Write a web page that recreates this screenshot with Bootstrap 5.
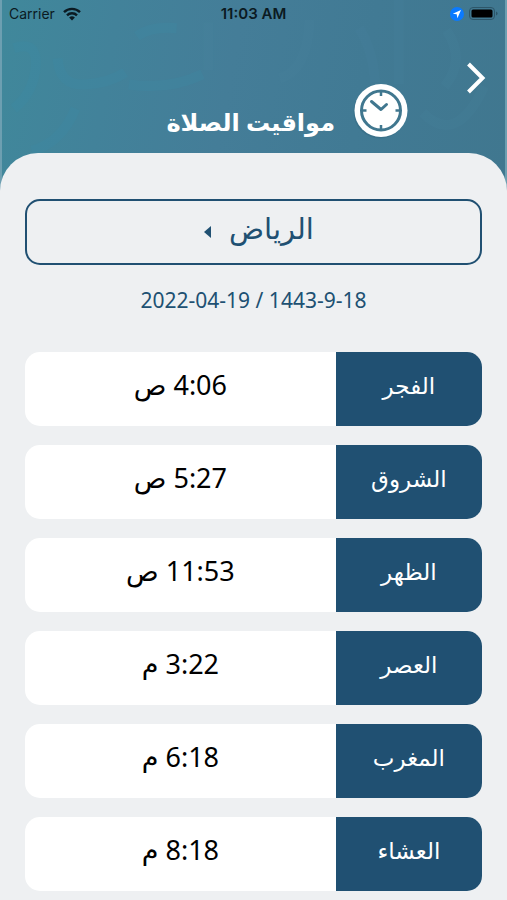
<!DOCTYPE html>
<html lang="ar" dir="rtl">
<head>
<meta charset="utf-8">
<meta name="viewport" content="width=device-width, initial-scale=1">
<title>مواقيت الصلاة</title>
<link href="https://cdn.jsdelivr.net/npm/bootstrap@5.3.0/dist/css/bootstrap.min.css" rel="stylesheet">
<style>
  :root { --navy: #205072; --paper: #eef0f2; }
  body { background: var(--paper); font-family: "Noto Sans", "DejaVu Sans", sans-serif; }
  .app-header {
    background: linear-gradient(100deg, #40889b 0%, #42829a 22%, #447d98 45%, #417a94 70%, #40778f 100%);
    border-inline: 2px solid #6d9fb1;
    padding-bottom: 52px;
  }
  .header-pattern { position: absolute; inset: 0; width: 100%; height: 100%; }
  .status-bar { height: 28px; padding: 0 7px; font: 14px/28px Inter, sans-serif; color: #0b1a22; }
  .status-time { font-weight: 600; font-size: 15px; }
  .back-btn { margin-top: 32px; line-height: 1; }
  .title-row { margin-top: 55px; margin-inline-start: 56px; gap: 18px; }
  .title-row h1 { font-size: 24px; line-height: 32px; padding-top: 23px; }
  .panel { background: var(--paper); border-radius: 38px 38px 0 0; margin-top: -38px; padding: 46px 25px 10px; }
  .city-btn {
    border: 2px solid var(--navy); border-radius: 15px; color: var(--navy);
    height: 66px; font-size: 29px; gap: 18px; padding: 0 0 8px 11px;
  }
  .city-btn svg { margin-top: 8px; }
  .date-line { color: var(--navy); font-size: 21px; line-height: 32px; margin: 19px 0 36px; }
  .times { gap: 19px; }
  .time-row { height: 74px; border-radius: 15px; }
  .prayer-name { flex: 0 0 32%; background: var(--navy); font-size: 23px; padding-bottom: 7px; }
  .prayer-time { font-size: 27px; color: #000; padding-bottom: 8px; }
</style>
</head>
<body>
<header class="app-header position-relative">
  <svg class="header-pattern" viewBox="0 0 507 190" preserveAspectRatio="none" fill="none" stroke-width="10" aria-hidden="true">
    <g stroke="#3c8ba6" opacity=".28">
      <path d="M12 48q24-8 22 18t-22 42"/><path d="M56 58q2 28 28 26t40-12"/><path d="M30 150q30-8 44-42"/>
      <path d="M136 36q14-10 40-8"/><path d="M128 84q40 6 74-10"/>
    </g>
    <g stroke="#4c86a2" opacity=".16">
      <path d="M208 22v48"/><path d="M310 20q-2 50-30 58"/><path d="M360 28q14 22 16 54"/><path d="M400 0v84"/><path d="M448 30q20 30-2 56"/><path d="M424 112q34 34 62-26"/>
    </g>
  </svg>
  <div class="status-bar position-relative d-flex justify-content-between align-items-center" dir="ltr">
    <div class="d-flex align-items-center gap-2 col">
      <span>Carrier</span>
      <svg width="18" height="14" viewBox="0 0 18 14" aria-label="Wi-Fi">
        <g fill="none" stroke="#0b1a22" stroke-width="2.4"><path d="M1 5.2a11.4 11.4 0 0 1 16 0"/><path d="M4 8.4a7 7 0 0 1 10 0"/></g>
        <path d="M9 13.6 6.1 10.600a4.200 4.200 0 0 1 5.800 0z" fill="#0b1a22"/>
      </svg>
    </div>
    <span class="status-time">11:03 AM</span>
    <div class="d-flex align-items-center justify-content-end col">
      <svg width="48" height="16" viewBox="0 0 48 16" aria-label="Battery">
        <circle cx="7" cy="8" r="7" fill="#0a7aff"/>
        <path d="M11 4 2.800 7.700l3.900.6.7 3.900z" fill="#fff"/>
        <rect x="19.500" y="1.500" width="25" height="12" rx="3.500" fill="none" stroke="#2d5669"/>
        <rect x="21.500" y="3.500" width="21" height="8" rx="1.500" fill="#000"/>
        <path d="M46 5.500v4q1.600-.6 1.600-2t-1.600-2z" fill="#2d5669"/>
      </svg>
    </div>
  </div>
  <div class="position-relative d-flex align-items-start">
    <button type="button" class="back-btn btn border-0 p-0" aria-label="رجوع">
      <svg width="40" height="36" viewBox="0 0 40 36" fill="none" stroke="#fff" stroke-width="4"><path d="m3.500 4 14 14-14 14"/></svg>
    </button>
    <div class="title-row d-flex align-items-start">
      <svg width="56" height="56" viewBox="0 0 56 56" aria-hidden="true">
        <circle cx="27" cy="29" r="26.500" fill="#2d6078" opacity=".35"/>
        <circle cx="28" cy="27.500" r="26.500" fill="#fff"/>
        <g fill="none" stroke="#40778f" stroke-width="3"><circle cx="28" cy="27.500" r="19.500"/>
        <path d="M28 8v5M28 42v5M8.500 27.500h5M42.500 27.500h5" stroke-width="2.500"/>
        <path d="m18.500 18.500 9.500 8 5.500-5" stroke-linecap="round" stroke-linejoin="round"/></g>
      </svg>
      <h1 class="fw-bold text-white mb-0">مواقيت الصلاة</h1>
    </div>
  </div>
</header>
<main class="panel position-relative">
  <button type="button" class="city-btn btn w-100 d-flex align-items-center justify-content-center">
    <span>الرياض</span>
    <svg width="7" height="12" viewBox="0 0 7 12" fill="currentColor" aria-hidden="true"><path d="M7 0v12L0 6z"/></svg>
  </button>
  <p class="date-line text-center" dir="ltr">2022-04-19 / 1443-9-18</p>
  <ul class="times list-unstyled d-flex flex-column p-0 mb-0">
    <li class="time-row d-flex overflow-hidden bg-white"><span class="prayer-name text-white d-flex align-items-center justify-content-center">الفجر</span><time class="prayer-time flex-fill d-flex align-items-center justify-content-center">4:06 ص</time></li>
    <li class="time-row d-flex overflow-hidden bg-white"><span class="prayer-name text-white d-flex align-items-center justify-content-center">الشروق</span><time class="prayer-time flex-fill d-flex align-items-center justify-content-center">5:27 ص</time></li>
    <li class="time-row d-flex overflow-hidden bg-white"><span class="prayer-name text-white d-flex align-items-center justify-content-center">الظهر</span><time class="prayer-time flex-fill d-flex align-items-center justify-content-center">11:53 ص</time></li>
    <li class="time-row d-flex overflow-hidden bg-white"><span class="prayer-name text-white d-flex align-items-center justify-content-center">العصر</span><time class="prayer-time flex-fill d-flex align-items-center justify-content-center">3:22 م</time></li>
    <li class="time-row d-flex overflow-hidden bg-white"><span class="prayer-name text-white d-flex align-items-center justify-content-center">المغرب</span><time class="prayer-time flex-fill d-flex align-items-center justify-content-center">6:18 م</time></li>
    <li class="time-row d-flex overflow-hidden bg-white"><span class="prayer-name text-white d-flex align-items-center justify-content-center">العشاء</span><time class="prayer-time flex-fill d-flex align-items-center justify-content-center">8:18 م</time></li>
  </ul>
</main>
<script src="https://cdn.jsdelivr.net/npm/bootstrap@5.3.0/dist/js/bootstrap.bundle.min.js"></script>
</body>
</html>
